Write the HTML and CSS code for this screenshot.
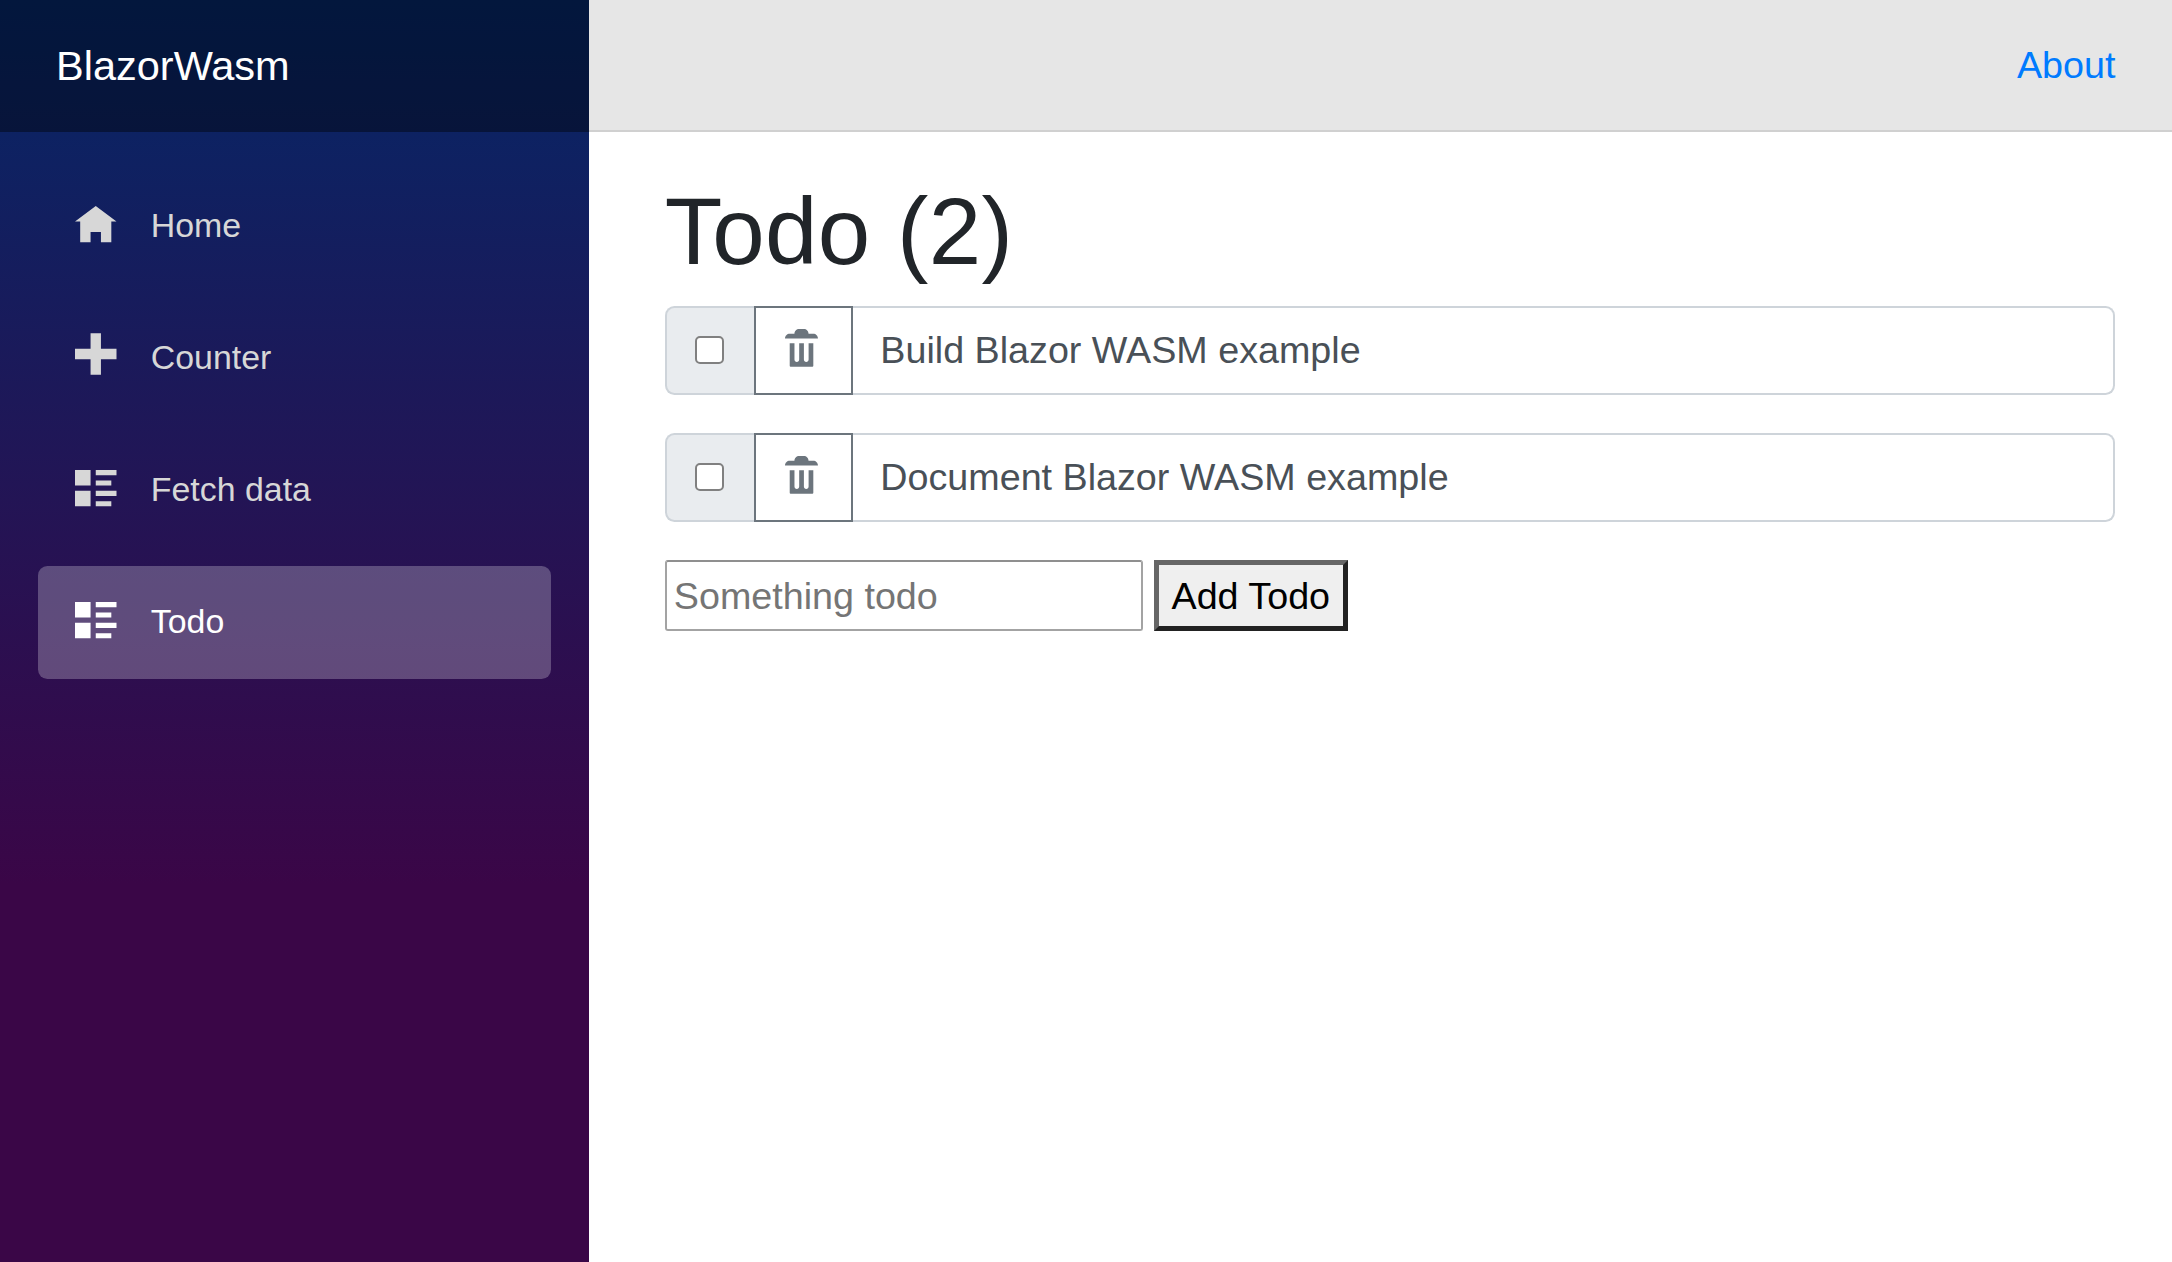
FILE: index.html
```html
<!DOCTYPE html>
<html lang="en">
<head>
<meta charset="utf-8">
<title>BlazorWasm</title>
<link rel="stylesheet" href="styles.css">
</head>
<body>
<div class="page">
  <aside class="sidebar">
    <div class="brand-row"><a class="brand">BlazorWasm</a></div>
    <nav class="nav">
      <a class="nav-link">
        <svg class="nav-icon" viewBox="0 0 8 8"><path d="M4 0l-4 3h1v4h2v-2h2v2h2v-4.03l1 .03-4-3z"/></svg>
        <span>Home</span>
      </a>
      <a class="nav-link">
        <svg class="nav-icon" viewBox="0 0.92 8 8"><path d="M3 0v3h-3v2h3v3h2v-3h3v-2h-3v-3h-2z"/></svg>
        <span>Counter</span>
      </a>
      <a class="nav-link">
        <svg class="nav-icon" viewBox="0 0 8 8"><path d="M0 0v3h3v-3h-3zm4 0v1h4v-1h-4zm0 2v1h3v-1h-3zm-4 2v3h3v-3h-3zm4 0v1h4v-1h-4zm0 2v1h3v-1h-3z"/></svg>
        <span>Fetch data</span>
      </a>
      <a class="nav-link active">
        <svg class="nav-icon" viewBox="0 0 8 8"><path d="M0 0v3h3v-3h-3zm4 0v1h4v-1h-4zm0 2v1h3v-1h-3zm-4 2v3h3v-3h-3zm4 0v1h4v-1h-4zm0 2v1h3v-1h-3z"/></svg>
        <span>Todo</span>
      </a>
    </nav>
  </aside>
  <div class="main">
    <header class="top-row"><a class="about">About</a></header>
    <main class="content">
      <h1 class="title">Todo (2)</h1>
      <div class="todo-row">
        <div class="addon"><input class="check" type="checkbox"></div>
        <button class="trash" type="button"><svg class="trash-icon" viewBox="0 0 8 8"><path d="M3 0c-.55 0-1 .45-1 1h-1c-.55 0-1 .45-1 1h7c0-.55-.45-1-1-1h-1c0-.55-.45-1-1-1h-1zm-2 3v4.81c0 .11.08.19.19.19h4.63c.11 0 .19-.08.19-.19v-4.81h-1v3.5c0 .28-.22.5-.5.5s-.5-.22-.5-.5v-3.5h-1v3.5c0 .28-.22.5-.5.5s-.5-.22-.5-.5v-3.5h-1z"/></svg></button>
        <input class="todo-text" type="text" value="Build Blazor WASM example">
      </div>
      <div class="todo-row">
        <div class="addon"><input class="check" type="checkbox"></div>
        <button class="trash" type="button"><svg class="trash-icon" viewBox="0 0 8 8"><path d="M3 0c-.55 0-1 .45-1 1h-1c-.55 0-1 .45-1 1h7c0-.55-.45-1-1-1h-1c0-.55-.45-1-1-1h-1zm-2 3v4.81c0 .11.08.19.19.19h4.63c.11 0 .19-.08.19-.19v-4.81h-1v3.5c0 .28-.22.5-.5.5s-.5-.22-.5-.5v-3.5h-1v3.5c0 .28-.22.5-.5.5s-.5-.22-.5-.5v-3.5h-1z"/></svg></button>
        <input class="todo-text" type="text" value="Document Blazor WASM example">
      </div>
      <form class="add-form">
        <input class="add-input" type="text" placeholder="Something todo">
        <button class="add-button" type="button">Add Todo</button>
      </form>
    </main>
  </div>
</div>
</body>
</html>
```

FILE: styles.css
```css
* { box-sizing: border-box; }
html, body { margin: 0; height: 100%; }
body {
  font-family: "Liberation Sans", Arial, sans-serif;
  font-size: 37.7px;
  color: #212529;
  background: #fff;
}
.page { display: flex; height: 1262px; overflow: hidden; }

.sidebar {
  width: 589px;
  flex: none;
  background: linear-gradient(180deg, rgb(5, 39, 103) 0%, #3a0647 70%);
}
.brand-row {
  height: 132px;
  display: flex;
  align-items: center;
  padding-left: 56px;
  background: rgba(0, 0, 0, 0.4);
}
.brand { font-size: 41.5px; color: #fff; }
.nav {
  display: flex;
  flex-direction: column;
  gap: 19px;
  padding: 38px 37.7px 0;
}
.nav-link {
  height: 113px;
  display: flex;
  align-items: center;
  padding-left: 37.7px;
  border-radius: 9.4px;
  font-size: 33.9px;
  color: #d7d7d7;
}
.nav-link span { margin-bottom: 2px; }
.nav-link.active { background: rgba(255, 255, 255, 0.25); color: #fff; }
.nav-icon {
  width: 41.5px;
  height: 41.5px;
  margin-right: 33.9px;
  flex: none;
  fill: currentColor;
  overflow: visible;
}

.main { flex: 1; display: flex; flex-direction: column; min-width: 0; }
.top-row {
  height: 132px;
  flex: none;
  display: flex;
  align-items: center;
  justify-content: flex-end;
  padding-right: 56.6px;
  background: #e6e6e6;
  border-bottom: 2.4px solid #d0d0d0;
}
.about { color: #007bff; }
.content { padding: 42.5px 56.6px 0 75.8px; }
.title {
  margin: 0 0 18.9px;
  font-size: 94.3px;
  font-weight: 500;
  line-height: 113px;
  letter-spacing: 0.3px;
}
.todo-row { display: flex; height: 89px; margin-bottom: 38px; }
.addon {
  width: 89.5px;
  flex: none;
  display: flex;
  align-items: center;
  justify-content: center;
  background: #e9ecef;
  border: 2.4px solid #ced4da;
  border-right: 0;
  border-radius: 9.4px 0 0 9.4px;
}
.check {
  appearance: none;
  width: 28.6px;
  height: 28.6px;
  margin: 0 2px 2px 0;
  background: #fff;
  border: 2.4px solid #808080;
  border-radius: 5px;
}
.trash {
  width: 98.5px;
  flex: none;
  display: flex;
  align-items: center;
  padding: 0 0 6px 28.3px;
  background: #fff;
  border: 2.4px solid #6c757d;
}
.trash-icon { width: 37.7px; height: 37.7px; fill: #6c757d; }
.todo-text {
  flex: 1;
  min-width: 0;
  padding: 0 28.3px 0 27.5px;
  font: inherit;
  color: #495057;
  background: #fff;
  border: 2.4px solid #ced4da;
  border-left: 0;
  border-radius: 0 9.4px 9.4px 0;
  outline: none;
}
.add-form { display: flex; gap: 11px; height: 71px; }
.add-input {
  width: 478px;
  padding: 1px 7px 0;
  font: inherit;
  background: #fff;
  border: 2.4px solid #a3a3a3;
  border-top-color: #8f8f8f;
  border-radius: 3px;
  outline: none;
}
.add-input::placeholder { color: #757575; opacity: 1; }
.add-button {
  width: 194px;
  padding: 1px 0 0;
  font: inherit;
  color: #000;
  background: #efefef;
  border: 5px solid;
  border-color: #666 #222 #222 #666;
}
```
